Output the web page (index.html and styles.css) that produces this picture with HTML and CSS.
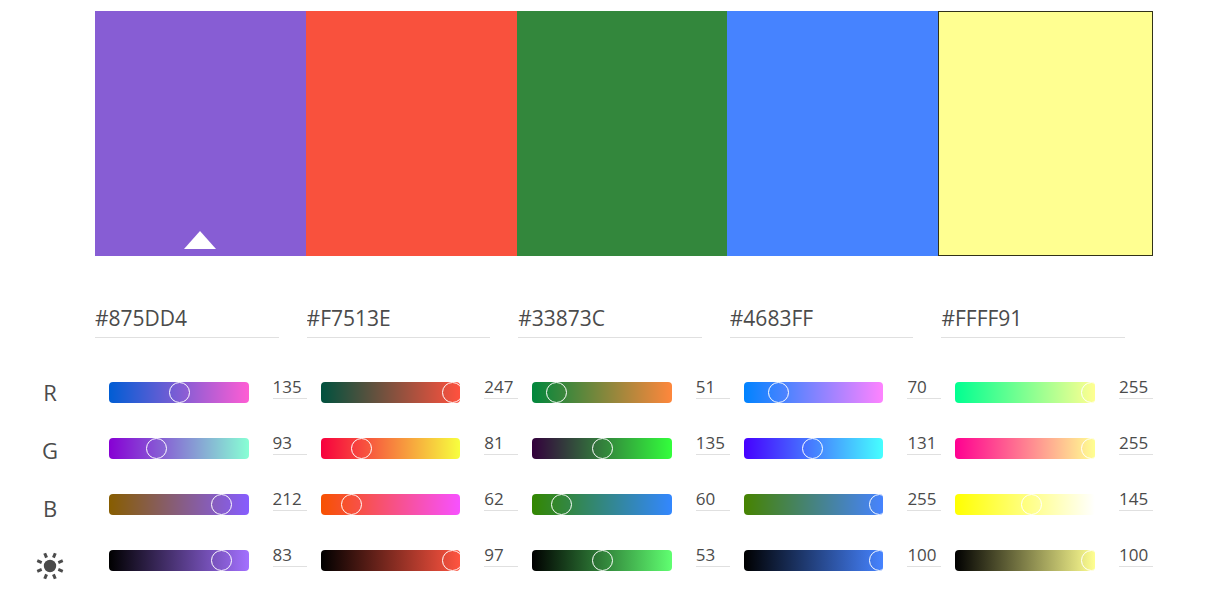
FILE: index.html
```html
<!DOCTYPE html>
<html lang="en">
<head>
<meta charset="utf-8">
<meta name="viewport" content="width=device-width, initial-scale=1">
<title>Color theme</title>
<link rel="stylesheet" href="styles.css">
</head>
<body>
<main class="editor">
  <div class="swatches">
    <button class="swatch" type="button" aria-label="#875DD4, base color" style="background:#875DD4">
      <svg class="base-mark" viewBox="0 0 32 18" aria-hidden="true"><path d="M16 0L32 18H0z" fill="#fff"/></svg>
    </button>
    <button class="swatch" type="button" aria-label="#F7513E" style="background:#F9513D"></button>
    <button class="swatch" type="button" aria-label="#33873C" style="background:#33873C"></button>
    <button class="swatch" type="button" aria-label="#4683FF" style="background:#4683FF"></button>
    <button class="swatch swatch-active" type="button" aria-label="#FFFF91" style="background:#FFFF91"></button>
  </div>

  <ul class="channels">
    <li>R</li>
    <li>G</li>
    <li>B</li>
    <li>
      <svg class="sun" viewBox="0 0 28 28" role="img" aria-label="Brightness">
        <circle cx="14" cy="14" r="6.2" fill="#4b4b4b"/>
        <g stroke="#4b4b4b" stroke-width="3">
          <path d="M14 5V.2" transform="rotate(22.5 14 14)"/>
          <path d="M14 5V.2" transform="rotate(67.5 14 14)"/>
          <path d="M14 5V.2" transform="rotate(112.5 14 14)"/>
          <path d="M14 5V.2" transform="rotate(157.5 14 14)"/>
          <path d="M14 5V.2" transform="rotate(202.5 14 14)"/>
          <path d="M14 5V.2" transform="rotate(247.5 14 14)"/>
          <path d="M14 5V.2" transform="rotate(292.5 14 14)"/>
          <path d="M14 5V.2" transform="rotate(337.5 14 14)"/>
        </g>
      </svg>
    </li>
  </ul>

  <div class="colors">
    <section class="color">
      <input class="hex" type="text" value="#875DD4" aria-label="Color 1 hex">
      <div class="row"><div class="track" style="--from:#005DD4;--to:#FF5DD4"><input class="range" type="range" max="255" value="135" aria-label="Color 1 red"></div><input class="value" type="text" value="135" aria-label="Color 1 red value"></div>
      <div class="row"><div class="track" style="--from:#8700D4;--to:#87FFD4"><input class="range" type="range" max="255" value="93" aria-label="Color 1 green"></div><input class="value" type="text" value="93" aria-label="Color 1 green value"></div>
      <div class="row"><div class="track" style="--from:#875D00;--to:#875DFF"><input class="range" type="range" max="255" value="212" aria-label="Color 1 blue"></div><input class="value" type="text" value="212" aria-label="Color 1 blue value"></div>
      <div class="row"><div class="track" style="--from:#000000;--to:#A370FF"><input class="range" type="range" max="100" value="83" aria-label="Color 1 brightness"></div><input class="value" type="text" value="83" aria-label="Color 1 brightness value"></div>
    </section>
    <section class="color">
      <input class="hex" type="text" value="#F7513E" aria-label="Color 2 hex">
      <div class="row"><div class="track" style="--from:#00513E;--to:#FF513E"><input class="range" type="range" max="255" value="247" aria-label="Color 2 red"></div><input class="value" type="text" value="247" aria-label="Color 2 red value"></div>
      <div class="row"><div class="track" style="--from:#F7003E;--to:#F7FF3E"><input class="range" type="range" max="255" value="81" aria-label="Color 2 green"></div><input class="value" type="text" value="81" aria-label="Color 2 green value"></div>
      <div class="row"><div class="track" style="--from:#F75100;--to:#F751FF"><input class="range" type="range" max="255" value="62" aria-label="Color 2 blue"></div><input class="value" type="text" value="62" aria-label="Color 2 blue value"></div>
      <div class="row"><div class="track" style="--from:#000000;--to:#FF5440"><input class="range" type="range" max="100" value="97" aria-label="Color 2 brightness"></div><input class="value" type="text" value="97" aria-label="Color 2 brightness value"></div>
    </section>
    <section class="color">
      <input class="hex" type="text" value="#33873C" aria-label="Color 3 hex">
      <div class="row"><div class="track" style="--from:#00873C;--to:#FF873C"><input class="range" type="range" max="255" value="51" aria-label="Color 3 red"></div><input class="value" type="text" value="51" aria-label="Color 3 red value"></div>
      <div class="row"><div class="track" style="--from:#33003C;--to:#33FF3C"><input class="range" type="range" max="255" value="135" aria-label="Color 3 green"></div><input class="value" type="text" value="135" aria-label="Color 3 green value"></div>
      <div class="row"><div class="track" style="--from:#338700;--to:#3387FF"><input class="range" type="range" max="255" value="60" aria-label="Color 3 blue"></div><input class="value" type="text" value="60" aria-label="Color 3 blue value"></div>
      <div class="row"><div class="track" style="--from:#000000;--to:#60FF71"><input class="range" type="range" max="100" value="53" aria-label="Color 3 brightness"></div><input class="value" type="text" value="53" aria-label="Color 3 brightness value"></div>
    </section>
    <section class="color">
      <input class="hex" type="text" value="#4683FF" aria-label="Color 4 hex">
      <div class="row"><div class="track" style="--from:#0083FF;--to:#FF83FF"><input class="range" type="range" max="255" value="70" aria-label="Color 4 red"></div><input class="value" type="text" value="70" aria-label="Color 4 red value"></div>
      <div class="row"><div class="track" style="--from:#4600FF;--to:#46FFFF"><input class="range" type="range" max="255" value="131" aria-label="Color 4 green"></div><input class="value" type="text" value="131" aria-label="Color 4 green value"></div>
      <div class="row"><div class="track" style="--from:#468300;--to:#4683FF"><input class="range" type="range" max="255" value="255" aria-label="Color 4 blue"></div><input class="value" type="text" value="255" aria-label="Color 4 blue value"></div>
      <div class="row"><div class="track" style="--from:#000000;--to:#4683FF"><input class="range" type="range" max="100" value="100" aria-label="Color 4 brightness"></div><input class="value" type="text" value="100" aria-label="Color 4 brightness value"></div>
    </section>
    <section class="color">
      <input class="hex" type="text" value="#FFFF91" aria-label="Color 5 hex">
      <div class="row"><div class="track" style="--from:#00FF91;--to:#FFFF91"><input class="range" type="range" max="255" value="255" aria-label="Color 5 red"></div><input class="value" type="text" value="255" aria-label="Color 5 red value"></div>
      <div class="row"><div class="track" style="--from:#FF0091;--to:#FFFF91"><input class="range" type="range" max="255" value="255" aria-label="Color 5 green"></div><input class="value" type="text" value="255" aria-label="Color 5 green value"></div>
      <div class="row"><div class="track" style="--from:#FFFF00;--to:#FFFFFF"><input class="range" type="range" max="255" value="145" aria-label="Color 5 blue"></div><input class="value" type="text" value="145" aria-label="Color 5 blue value"></div>
      <div class="row"><div class="track" style="--from:#000000;--to:#FFFF91"><input class="range" type="range" max="100" value="100" aria-label="Color 5 brightness"></div><input class="value" type="text" value="100" aria-label="Color 5 brightness value"></div>
    </section>
  </div>
</main>
</body>
</html>
```
FILE: styles.css
```css
* {
  box-sizing: border-box;
}

body {
  margin: 0;
  background: #fff;
  color: #4b4b4b;
  font-family: "Open Sans", "Noto Sans", sans-serif;
}

.editor {
  display: grid;
  grid-template-columns: 28px minmax(0, 1fr);
  column-gap: 31px;
  row-gap: 44px;
  padding: 11px 72px 0 36px;
}

.swatches {
  grid-column: 2;
  display: flex;
  height: 245px;
}

.swatch {
  flex: 1 1 0;
  display: flex;
  align-items: flex-end;
  justify-content: center;
  padding: 0 0 7px;
  border: 0;
  border-radius: 0;
}

.swatch-active {
  flex-basis: 4px;
  border: 1px solid #323218;
}

.base-mark {
  width: 32px;
  height: 18px;
}

.channels {
  margin: 0;
  padding: 63px 0 0;
  list-style: none;
  font-size: 22px;
  line-height: 58px;
}

.channels li {
  display: flex;
  align-items: center;
  justify-content: center;
  height: 58px;
}

.sun {
  width: 28px;
  height: 28px;
}

.colors {
  display: grid;
  grid-template-columns: repeat(5, minmax(0, 1fr));
  align-items: start;
}

.color {
  display: flex;
  flex-direction: column;
  gap: 27px;
}

.hex,
.value {
  min-width: 0;
  padding: 0;
  border: 0;
  border-bottom: 1px solid #e0e0e0;
  border-radius: 0;
  background: transparent;
  color: inherit;
  font-family: inherit;
}

.hex {
  height: 38px;
  margin: 0 28px 9px 0;
  padding-bottom: 2px;
  font-size: 21px;
}

.row {
  display: flex;
  gap: 24px;
  height: 29px;
  padding-left: 14px;
}

.track {
  flex: 1;
  align-self: flex-end;
  height: 21px;
  overflow: hidden;
  border-radius: 4px;
  background: linear-gradient(to right, var(--from), var(--to));
}

.range {
  appearance: none;
  display: block;
  width: calc(100% + 21px);
  height: 21px;
  margin: 0 0 0 -14px;
  background: transparent;
}

.range::-webkit-slider-thumb {
  appearance: none;
  box-sizing: border-box;
  width: 21px;
  height: 21px;
  border: 1px solid #fff;
  border-radius: 50%;
  background: transparent;
}

.value {
  width: 34px;
  height: 25px;
  font-size: 17px;
}
```
